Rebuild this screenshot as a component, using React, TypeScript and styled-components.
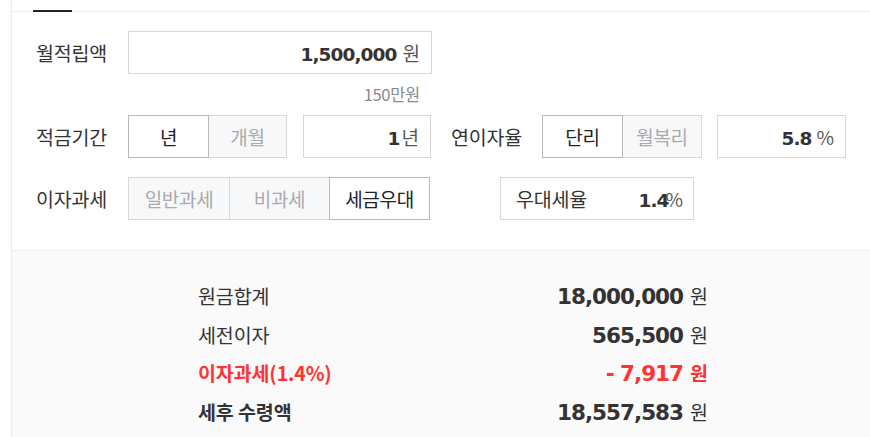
import React from 'react';
import styled, { createGlobalStyle } from 'styled-components';

const GlobalStyle = createGlobalStyle`
  body {
    margin: 0;
    background: #fff;
    font-family: "Noto Sans CJK KR", "Noto Sans", sans-serif;
    color: #333;
  }
`;

const Page = styled.div`
  padding-left: 11px;
`;

const Card = styled.div`
  border-left: 1px solid #ececec;
  min-height: 437px;
  box-sizing: border-box;
`;

const TabBar = styled.div`
  display: flex;
  align-items: flex-end;
  height: 12px;
  box-sizing: border-box;
  border-bottom: 1px solid #eeeeee;
`;

const ActiveTab = styled.div`
  width: 39px;
  height: 2px;
  margin-left: 21px;
  margin-bottom: -1px;
  background: #222;
`;

const Form = styled.div`
  padding: 19px 0 30px 24px;
`;

const Row = styled.div<{ $mt?: number }>`
  display: flex;
  align-items: center;
  height: 43px;
  margin-top: ${p => p.$mt ?? 0}px;
`;

const Label = styled.div<{ $w?: number; $ml?: number }>`
  width: ${p => p.$w ?? 92}px;
  margin-left: ${p => p.$ml ?? 0}px;
  flex-shrink: 0;
  font-size: 19.5px;
  letter-spacing: -0.2px;
  color: #333;
`;

const InputBox = styled.div<{ $w: number; $ml?: number }>`
  width: ${p => p.$w}px;
  margin-left: ${p => p.$ml ?? 0}px;
  height: 43px;
  box-sizing: border-box;
  border: 1px solid #d6d6d6;
  padding-right: 11px;
  text-align: right;
  line-height: 41px;
  white-space: nowrap;
`;

const Num = styled.span`
  font-family: "DejaVu Sans", Verdana, sans-serif;
  font-weight: bold;
  font-size: 18.5px;
  color: #333;
  letter-spacing: -0.9px;
`;

const Unit = styled.span<{ $ml?: number }>`
  font-size: 19px;
  color: #555;
  margin-left: ${p => p.$ml ?? 0}px;
`;

const Hint = styled.div`
  width: 304px;
  margin-left: 92px;
  height: 41px;
  line-height: 41px;
  box-sizing: border-box;
  padding-right: 12px;
  text-align: right;
  font-size: 16.5px;
  letter-spacing: -0.3px;
  color: #8a8a8a;
`;

const Toggle = styled.div<{ $ml?: number }>`
  display: flex;
  margin-left: ${p => p.$ml ?? 0}px;
`;

const ToggleButton = styled.div<{ $w: number; $on?: boolean }>`
  position: relative;
  width: ${p => p.$w}px;
  height: 43px;
  box-sizing: border-box;
  margin-left: -1px;
  &:first-child { margin-left: 0; }
  border: 1px solid ${p => (p.$on ? '#b8b8b8' : '#d8d8d8')};
  background: ${p => (p.$on ? '#fff' : '#f7f8fa')};
  color: ${p => (p.$on ? '#222' : '#aaa')};
  z-index: ${p => (p.$on ? 1 : 0)};
  display: flex;
  align-items: center;
  justify-content: center;
  font-size: 19px;
  letter-spacing: -0.3px;
`;

const RateBox = styled.div`
  display: flex;
  align-items: center;
  justify-content: space-between;
  width: 194px;
  height: 43px;
  margin-left: 70px;
  box-sizing: border-box;
  border: 1px solid #d6d6d6;
  padding: 0 10px 0 15px;
  white-space: nowrap;
`;

const RateName = styled.span`
  font-size: 19.5px;
  letter-spacing: -0.2px;
  color: #333;
`;

const Results = styled.div`
  background: #fafafa;
  border-top: 1px solid #f0f0f0;
  padding: 26px 0 20px 186px;
`;

const ResultRow = styled.div`
  display: flex;
  justify-content: space-between;
  align-items: baseline;
  width: 510px;
  height: 38.7px;
  line-height: 38.7px;
`;

const ResultLabel = styled.span<{ $red?: boolean; $bold?: boolean }>`
  font-size: 19.5px;
  letter-spacing: -0.1px;
  font-weight: ${p => (p.$bold || p.$red ? 'bold' : 'normal')};
  color: ${p => (p.$red ? '#ff3333' : '#333')};
`;

const ResultValue = styled.span<{ $red?: boolean }>`
  font-family: "DejaVu Sans", Verdana, sans-serif;
  font-weight: bold;
  font-size: 21.5px;
  letter-spacing: -1px;
  color: ${p => (p.$red ? '#ff3333' : '#333')};
`;

const ResultUnit = styled.span<{ $red?: boolean }>`
  font-family: "Noto Sans CJK KR", sans-serif;
  font-size: 19.5px;
  margin-left: 7px;
  font-weight: ${p => (p.$red ? 'bold' : 'normal')};
  color: ${p => (p.$red ? '#ff3333' : '#333')};
`;

const results = [
  { label: '원금합계', value: '18,000,000' },
  { label: '세전이자', value: '565,500' },
  { label: '이자과세(1.4%)', value: '- 7,917', red: true },
  { label: '세후 수령액', value: '18,557,583', bold: true },
];

export default function App() {
  return (
    <Page>
      <GlobalStyle />
      <Card>
        <TabBar>
          <ActiveTab />
        </TabBar>
        <Form>
          <Row>
            <Label>월적립액</Label>
            <InputBox $w={304}>
              <Num>1,500,000</Num>
              <Unit $ml={6}>원</Unit>
            </InputBox>
          </Row>
          <Hint>150만원</Hint>
          <Row>
            <Label>적금기간</Label>
            <Toggle>
              <ToggleButton $w={81} $on>년</ToggleButton>
              <ToggleButton $w={79}>개월</ToggleButton>
            </Toggle>
            <InputBox $w={128} $ml={16}>
              <Num>1</Num>
              <Unit $ml={2}>년</Unit>
            </InputBox>
            <Label $w={91} $ml={20}>연이자율</Label>
            <Toggle>
              <ToggleButton $w={81} $on>단리</ToggleButton>
              <ToggleButton $w={80}>월복리</ToggleButton>
            </Toggle>
            <InputBox $w={129} $ml={15}>
              <Num>5.8</Num>
              <Unit $ml={5}>%</Unit>
            </InputBox>
          </Row>
          <Row $mt={19}>
            <Label>이자과세</Label>
            <Toggle>
              <ToggleButton $w={102}>일반과세</ToggleButton>
              <ToggleButton $w={101}>비과세</ToggleButton>
              <ToggleButton $w={101} $on>세금우대</ToggleButton>
            </Toggle>
            <RateBox>
              <RateName>우대세율</RateName>
              <span>
                <Num>1.4</Num>
                <Unit $ml={-3}>%</Unit>
              </span>
            </RateBox>
          </Row>
        </Form>
        <Results>
          {results.map(r => (
            <ResultRow key={r.label}>
              <ResultLabel $red={r.red} $bold={r.bold}>{r.label}</ResultLabel>
              <span>
                <ResultValue $red={r.red}>{r.value}</ResultValue>
                <ResultUnit $red={r.red}>원</ResultUnit>
              </span>
            </ResultRow>
          ))}
        </Results>
      </Card>
    </Page>
  );
}
